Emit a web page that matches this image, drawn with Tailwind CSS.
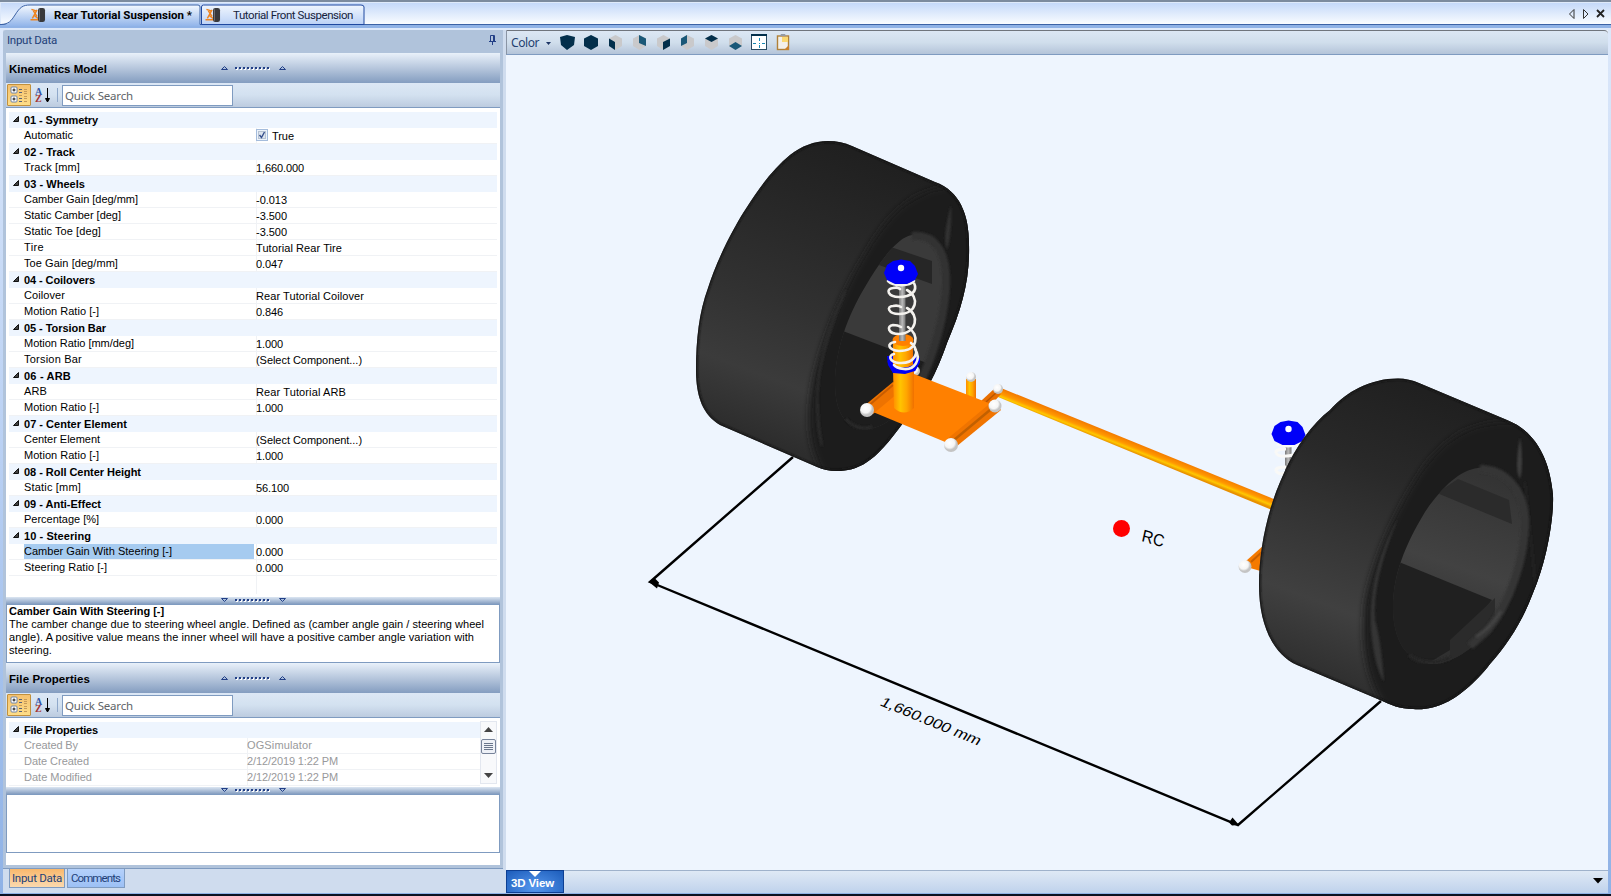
<!DOCTYPE html>
<html lang="en"><head><meta charset="utf-8"><title>Rear Tutorial Suspension</title>
<script src="https://cdn.jsdelivr.net/npm/@tailwindcss/browser@4"></script></head>
<body class="w-[1611px] h-[896px] overflow-hidden flex flex-col bg-[#dce8fa] font-['Liberation_Sans',sans-serif] text-[11px] leading-[13px] text-black">
<svg class="hidden">
 <defs>
  <symbol id="tire" viewBox="0 0 16 16"><path d="M1 1.500l6 2M0 12.500h9M7 2L2 11M3 3l4 6M4 8l4 3" stroke="#ed8420" stroke-width="1.500" fill="none"/><rect x="8" y="0" width="7.500" height="15" rx="2.500" fill="#39393b"/><path d="M9.500 1.500v12" stroke="#77777a"/></symbol>
  <symbol id="cat" viewBox="0 0 18 18"><g fill="#fff" stroke="#6f83a5"><rect x="1" y="1" width="6" height="6" rx="1"/><rect x="1" y="10" width="6" height="6" rx="1"/></g><path d="M2.500 4h3M4 2.500v3M2.500 13h3M4 11.500v3" stroke="#111"/><path d="M9 3.500h3M9 6.500h3M9 12.500h3M9 15.500h3" stroke="#55627a"/><path d="M14 3.500h3M14 5.500h3M14 7.500h3M14 10.500h3M14 12.500h3M9 9.500h3M14 15.500h3" stroke="#c59a58"/></symbol>
  <symbol id="up" viewBox="0 0 7 4"><path d="M.5 3.500h6L3.500.5z" fill="#a9bedb" stroke="#223f86"/></symbol>
  <symbol id="dn" viewBox="0 0 7 4"><path d="M.5.5h6L3.500 3.500z" fill="#a9bedb" stroke="#223f86"/></symbol>
  <symbol id="dots" viewBox="0 0 36 3"><path d="M1 2h36" stroke="#fff" stroke-width="2" stroke-dasharray="2 2"/><path d="M0 1h34" stroke="#223f86" stroke-width="2" stroke-dasharray="2 2"/></symbol>
 </defs>
</svg>
<div class="h-[2px] shrink-0 bg-[#7c8b9e]"></div>
<!-- document tabs -->
<header class="h-[28px] shrink-0 relative font-['Roboto','Open_Sans',sans-serif]">
 <svg class="block w-[1611px] h-[28px]" viewBox="0 2 1611 28">
  <defs><linearGradient id="hg" x2="0" y2="1"><stop stop-color="#c5d9f9"/><stop offset="1" stop-color="#f9fcff"/></linearGradient>
  <linearGradient id="t1" x2="0" y2="1"><stop stop-color="#f4f9ff"/><stop offset="1" stop-color="#92b5ea"/></linearGradient>
  <linearGradient id="t2" x2="0" y2="1"><stop stop-color="#f0f6fe"/><stop offset="1" stop-color="#bcd2f6"/></linearGradient></defs>
  <path d="M0 2.500h1611" stroke="#dfeafa"/><rect x="1" y="3" width="1610" height="21" fill="url(#hg)"/>
  <rect y="24" width="1611" height="1" fill="#3b62a5"/><rect y="25" width="1611" height="3" fill="#8fb2e6"/><rect y="28" width="1611" height="2" fill="#dce8fa"/>
  <path d="M1 25C9 25 11 21 15 15C20 7 23 5 30 5H198Q200 5 200 7V26H1z" fill="url(#t1)"/><path d="M1 24.500C9 24 11 21 15 15C20 7 23 5 30 5H198Q200 5 200 7V24.500" fill="none" stroke="#3b62a5"/>
  <path d="M201.500 24.500V7Q201.500 5 203.500 5H361Q364 5 364 7V24.500z" fill="url(#t2)" stroke="#1f48a0"/>
  <path d="M1574 9.500v9l-4.500-4.500z" fill="none" stroke="#333"/><path d="M1583.500 9.500v9l4.500-4.500z" fill="none" stroke="#333"/><path d="M1597 10l7 7M1604 10l-7 7" stroke="#222" stroke-width="1.800"/>
 </svg>
 <div class="absolute left-[30px] top-[5px] flex items-center h-[16px]"><svg class="w-[16px] h-[15px]"><use href="#tire"/></svg><span class="ml-[8px] text-[11.500px] font-bold whitespace-nowrap" data-w="138">Rear Tutorial Suspension *</span></div>
 <div class="absolute left-[205px] top-[5px] flex items-center h-[16px]"><svg class="w-[16px] h-[15px]"><use href="#tire"/></svg><span class="ml-[12px] text-[11.500px] whitespace-nowrap text-[#16233c]" data-w="120">Tutorial Front Suspension</span></div>
</header>
<main class="h-[863px] shrink-0 flex">
 <div class="w-[3px] bg-linear-to-b from-[#dce8fa] via-[#b9d0f3] to-[#8fb2e6]"></div>
 <section class="w-[500px] flex flex-col bg-[#cfdcee]">
  <div class="h-[838px] shrink-0 bg-[#b0c3db] rounded-tl-[3px] px-[3px] flex flex-col">
   <div class="h-[23px] shrink-0 flex items-center justify-between pl-px pr-[4px] pb-[2px] text-[#223f78] font-['Roboto','Open_Sans',sans-serif] text-[11.500px]"><span data-w="50">Input Data</span>
    <svg class="w-[7px] h-[10px] mb-[2px]" viewBox="0 0 7 10"><path d="M1.500 6V.5h4V6M0 6.500h7M3.500 7v3M4.500 1v5" stroke="#223f86" fill="none"/></svg></div>
   <div class="h-[30px] shrink-0 flex items-center bg-linear-to-b from-[#e9f1fa] via-[#b7c7dd] to-[#849dc0] pl-[3px]"><span class="w-[212px] font-bold text-[11.500px] pt-[2px]"><span data-w="98">Kinematics Model</span></span><svg class="w-[7px] h-[4px]"><use href="#up"/></svg><svg class="ml-[7px] w-[36px] h-[3px]"><use href="#dots"/></svg><svg class="ml-[8px] w-[7px] h-[4px]"><use href="#up"/></svg></div>
   <div class="h-[25px] shrink-0 flex items-center border-b border-[#7f9bc0] bg-linear-to-b from-[#dce7f5] via-[#d3e1f0] to-[#bccbdf] pl-px">
    <div class="w-[24px] h-[22px] border border-[#c2903c] rounded-[1px] bg-linear-to-b from-[#f5c16f] to-[#fddd88] flex items-center justify-center"><svg class="w-[18px] h-[18px]"><use href="#cat"/></svg></div>
    <div class="ml-[4px] flex flex-col w-[8px] text-[10px] leading-[7px] font-bold font-['Liberation_Serif',serif]"><span class="text-[#3458a5]">A</span><span class="text-[#a53434]">Z</span></div>
    <svg class="w-[7px] h-[15px] ml-px" viewBox="0 0 7 15"><path d="M3.500 0v12M1.500 10.500L3.500 14L5.500 10.500z" stroke="#000"/></svg>
    <div class="ml-[6px] w-px h-[14px] bg-[#8fa8ca]"></div>
    <div class="ml-[4px] w-[171px] h-[21px] border border-[#7f9bc0] bg-white pl-[2px] pt-[3px] text-[#606468] font-['Noto_Sans',sans-serif] text-[11.500px]"><span data-w="68">Quick Search</span></div>
   </div>
   <div class="h-[489px] shrink-0 bg-white pl-[3px] pt-[4px] pr-[3px]"><div id="grid"></div><div class="ml-[247px] h-[18px] border-l border-[#f0f2f5]"></div></div>
   <div class="h-[7px] shrink-0 flex items-center bg-linear-to-b from-[#dce6f2] to-[#849dc0] pl-[215px] pb-px"><svg class="w-[7px] h-[4px]"><use href="#dn"/></svg><svg class="ml-[7px] w-[36px] h-[3px]"><use href="#dots"/></svg><svg class="ml-[8px] w-[7px] h-[4px]"><use href="#dn"/></svg></div>
   <div class="h-[59px] shrink-0 bg-white border border-[#7f9bc0] pl-[2px] whitespace-nowrap"><div class="font-bold"><span data-w="155">Camber Gain With Steering [-]</span></div><div><span data-w="475">The camber change due to steering wheel angle. Defined as (camber angle gain / steering wheel</span></div><div><span data-w="465">angle). A positive value means the inner wheel will have a positive camber angle variation with</span></div><div><span data-w="43">steering.</span></div></div>
   <div class="h-[30px] shrink-0 flex items-center bg-linear-to-b from-[#e9f1fa] via-[#b7c7dd] to-[#849dc0] pl-[3px]"><span class="w-[212px] font-bold text-[11.500px] pt-[2px]"><span data-w="81">File Properties</span></span><svg class="w-[7px] h-[4px]"><use href="#up"/></svg><svg class="ml-[7px] w-[36px] h-[3px]"><use href="#dots"/></svg><svg class="ml-[8px] w-[7px] h-[4px]"><use href="#up"/></svg></div>
   <div class="h-[25px] shrink-0 flex items-center border-b border-[#7f9bc0] bg-linear-to-b from-[#dce7f5] via-[#d3e1f0] to-[#bccbdf] pl-px">
    <div class="w-[24px] h-[22px] border border-[#c2903c] rounded-[1px] bg-linear-to-b from-[#f5c16f] to-[#fddd88] flex items-center justify-center"><svg class="w-[18px] h-[18px]"><use href="#cat"/></svg></div>
    <div class="ml-[4px] flex flex-col w-[8px] text-[10px] leading-[7px] font-bold font-['Liberation_Serif',serif]"><span class="text-[#3458a5]">A</span><span class="text-[#a53434]">Z</span></div>
    <svg class="w-[7px] h-[15px] ml-px" viewBox="0 0 7 15"><path d="M3.500 0v12M1.500 10.500L3.500 14L5.500 10.500z" stroke="#000"/></svg>
    <div class="ml-[6px] w-px h-[14px] bg-[#8fa8ca]"></div>
    <div class="ml-[4px] w-[171px] h-[21px] border border-[#7f9bc0] bg-white pl-[2px] pt-[3px] text-[#606468] font-['Noto_Sans',sans-serif] text-[11.500px]"><span data-w="68">Quick Search</span></div>
   </div>
   <div class="h-[69px] shrink-0 bg-white pl-[3px] pr-[3px] pt-[3px] flex"><div id="grid2" class="w-[471px] pt-px"></div>
    <svg class="w-[17px] h-[64px]" viewBox="0 0 17 64"><rect x=".5" y=".5" width="16" height="62" fill="#f8f9fb" stroke="#e3e7ef"/><path d="M4 11h9L8.500 6z" fill="#444"/><rect x="1.500" y="18.500" width="14" height="14" rx="1.500" fill="#eef1f7" stroke="#77839a"/><path d="M4 22.500h9M4 24.500h9M4 26.500h9M4 28.500h9" stroke="#69768c"/><path d="M4 52h9L8.500 57z" fill="#444"/></svg></div>
   <div class="h-[7px] shrink-0 flex items-center bg-linear-to-b from-[#dce6f2] to-[#849dc0] pl-[215px] pb-px"><svg class="w-[7px] h-[4px]"><use href="#dn"/></svg><svg class="ml-[7px] w-[36px] h-[3px]"><use href="#dots"/></svg><svg class="ml-[8px] w-[7px] h-[4px]"><use href="#dn"/></svg></div>
   <div class="h-[59px] shrink-0 bg-white border border-[#7f9bc0]"></div>
   <div class="h-[12px] shrink-0 bg-white"></div>
  </div>
  <div class="h-px bg-[#7f9bc0] shrink-0"></div>
  <div class="flex pl-[6px] gap-[2px] font-['Roboto','Open_Sans',sans-serif] text-[11.500px] text-[#223f78]">
   <div class="w-[56px] h-[19px] border border-t-0 border-[#7f9bc0] bg-linear-to-b from-[#f9b86c] to-[#fbd9ae] pl-[2px] pt-[3px]"><span data-w="50">Input Data</span></div>
   <div class="w-[58px] h-[19px] border border-t-0 border-[#7f9bc0] bg-linear-to-b from-[#b5d1fb] to-[#9cc0f5] pl-[3px] pt-[3px]"><span data-w="49">Comments</span></div>
  </div>
 </section>
 <div class="w-[3px] bg-[#cfdcee]"></div>
 <section class="w-[1102px] flex flex-col bg-[#eef5fe]">
  <div class="h-[25px] shrink-0 border-t border-l border-t-[#70757d] border-l-[#8a95a5] border-b border-b-[#7f9bc0] bg-linear-to-b from-[#dce7f4] via-[#d0deec] to-[#b4c4d9] rounded-tr-[4px] flex items-center pl-[4px] text-[#24406f]">
   <div class="w-[34px] shrink-0 text-[12px] font-['Noto_Sans',sans-serif]"><span data-w="28">Color</span></div>
   <svg class="w-[270px] h-[22px]" viewBox="545 32 270 22">
    <path d="M546 42h5l-2.500 3z" fill="#1e3566"/>
    <path d="M560 37L567 35L575 37L574 45L567 50L561 45zM591 35L598 38.500V46L591 50L584 46V38.500z" fill="#032f4b"/>
    <g fill="#c9c9cb"><path d="M615.500 35L622 38.500V46L615.500 50L609 46V38.500zM639.500 35L646 38.500V46L639.500 50L633 46V38.500zM663.500 35L670 38.500V46L663.500 50L657 46V38.500zM687 35L694 38.500V46L687 50L681 46V38.500zM711.500 35L718 38.500V46L711.500 50L705 46V38.500zM735.500 35L742 38.500V46L735.500 50L729 46V38.500z"/></g>
    <path d="M609 38.500L615 42V50L609 46zM663 42L670 38.500V46L663 50zM705 38.500L711.500 35L718 38.500L711.500 42z" fill="#032f4b"/><path d="M639 35L646 38.500V46L639 43zM681 38.500L687 35V43L681 46zM729 46L735.500 42L742 46L735.500 50z" fill="#1a5878"/>
    <rect x="751.500" y="34.500" width="15" height="15" fill="#fff" stroke="#294a62"/><path d="M751 35h16" stroke="#032f4b" stroke-width="2"/><path d="M759.500 38v4M759.500 45v4M753 43.500h4M762 43.500h4" stroke="#1689b5" stroke-dasharray="3 1"/><path d="M759 43.500h1" stroke="#1689b5"/>
    <rect x="777.500" y="36" width="11" height="13.500" fill="#f3f0ea" stroke="#b08038" stroke-width="1.400"/><rect x="782" y="37" width="6" height="5" fill="#fbd972"/><path d="M780 36h6l-1-2h-4z" fill="#949ba6"/><path d="M784 50l5-5v5z" fill="#c8802b"/>
   </svg>
  </div>
  <svg class="block w-[1102px] h-[815px] shrink-0" viewBox="506 55 1102 815">
   <defs>
    <linearGradient id="tr" gradientUnits="userSpaceOnUse" x1="1445" y1="400" x2="1340" y2="680"><stop stop-color="#202020"/><stop offset=".3" stop-color="#292929"/><stop offset=".55" stop-color="#353535"/><stop offset=".78" stop-color="#404040"/><stop offset="1" stop-color="#303030"/></linearGradient>
    <linearGradient id="trl" gradientUnits="userSpaceOnUse" x1="870" y1="160" x2="765" y2="440"><stop stop-color="#202020"/><stop offset=".3" stop-color="#292929"/><stop offset=".55" stop-color="#313131"/><stop offset=".8" stop-color="#3b3b3b"/><stop offset="1" stop-color="#2d2d2d"/></linearGradient>
    <linearGradient id="bore" gradientUnits="userSpaceOnUse" x1="1490" y1="480" x2="1435" y2="640"><stop stop-color="#343434"/><stop offset=".55" stop-color="#424242"/><stop offset="1" stop-color="#303030"/></linearGradient>
    <linearGradient id="cyl"><stop stop-color="#ff8c00"/><stop offset=".35" stop-color="#ffc400"/><stop offset=".65" stop-color="#ffa500"/><stop offset="1" stop-color="#f07000"/></linearGradient>
    <linearGradient id="rod"><stop stop-color="#777"/><stop offset=".5" stop-color="#bbb"/><stop offset="1" stop-color="#777"/></linearGradient>
    <linearGradient id="bar" gradientUnits="userSpaceOnUse" x1="1138" y1="443" x2="1134" y2="453"><stop stop-color="#f27800"/><stop offset=".5" stop-color="#ff9800"/><stop offset=".75" stop-color="#ffc800"/><stop offset="1" stop-color="#e89000"/></linearGradient>
    <radialGradient id="ball" cx=".4" cy=".35"><stop stop-color="#fff"/><stop offset=".7" stop-color="#f5f5f5"/><stop offset="1" stop-color="#c4c4c4"/></radialGradient>
    <filter id="b1" x="-20%" y="-20%" width="140%" height="140%"><feGaussianBlur stdDeviation="1"/></filter><filter id="b2" x="-20%" y="-20%" width="140%" height="140%"><feGaussianBlur stdDeviation="3"/></filter>
    <path id="outR" d="M1398 378.500Q1409 378.500 1419 383L1507 420C1537 432 1550 461 1553 495C1554 520 1546 563 1533 593C1523 620 1508 644 1490 664C1475 684 1456 698 1447 702C1435 708 1424 710 1413 709C1400 709 1391 705 1380 700L1297 665C1273 654 1259 625 1259 585C1259 548 1268 507 1284 473C1296 446 1312 424 1330 410C1346 392 1370 378.500 1398 378.500z"/>
    <path id="outL" d="M828 141Q841 141 852 146L935 182C960 191 969 215 969 244C970 280 962 308 947 343C938 370 922 402 903 423C890 441 877 456 867 462C857 469 846 471 837 471Q826 471 817 467L720 425C703 415 696 397 696 370C696 340 699 312 708 288C716 262 733 228 747 207C761 185 775 167 790 155C802 146 814 141 828 141z"/>
    <clipPath id="cr"><use href="#outR"/></clipPath><clipPath id="cl"><use href="#outL"/></clipPath>
    <path id="holeR" d="M1478 468C1504 466 1525 488 1526 520C1527 556 1511 603 1488 630C1472 651 1448 665 1431 664C1406 662 1393 639 1393 608C1393 575 1405 545 1425 512C1442 487 1460 470 1478 468z"/><clipPath id="chr"><use href="#holeR"/></clipPath>
    <path id="holeL" d="M912 235C934 233 945 250 946 277C947 310 934 356 918 386C902 415 882 430 864 429C845 428 835 411 835 384C835 350 848 315 865 287C879 263 897 237 912 235z"/><clipPath id="chl"><use href="#holeL"/></clipPath>
   </defs>
   <g stroke="#000" stroke-width="2.400" fill="none"><path d="M793 457L650 582L1238 825L1381 701"/></g>
   <path d="M649 582l6-3.500 4 4-2 6zM1239 825l-7 .5-3-3 3.500-5z"/>
   <use href="#outL" fill="url(#trl)"/>
   <g clip-path="url(#cl)">
    <path d="M960 185C910 188 889 214 867 250C835 302 817 356 812 385C804 430 812 456 826 478L900 480L980 390V210z" fill="#1e1e1e" filter="url(#b2)"/>
    <path d="M846 290C823 335 818 375 817 400Q817 430 822 446Q815 410 819 375Q826 335 846 290z" fill="#363636" stroke="#2c2c2c" stroke-width="2" filter="url(#b1)"/><path d="M951 205C944 232 944 242 947 250Q952 235 951 205z" fill="#303030" filter="url(#b1)"/>
    <use href="#holeL" fill="#3a3a3a"/><g clip-path="url(#chl)"><path d="M835 328L950 372V440H820z" fill="#1d1d1d"/><path d="M870 240L932 261V284L865 260z" fill="#262626"/></g>
    <path d="M912 236C934 234 945 250 946 277C947 310 934 356 918 386" fill="none" stroke="#333" stroke-width="8" filter="url(#b1)"/><path d="M846 419Q856 431 872 427" fill="none" stroke="#292929" stroke-width="3" filter="url(#b1)"/>
    <use href="#outL" fill="none" stroke="#151515" stroke-width="3" filter="url(#b1)"/>
   </g>
   <!-- bar and suspension plate -->
   <path d="M1001 388L1276 500L1272 510L998 397z" fill="url(#bar)"/>
   <rect x="966" y="379" width="10" height="24" fill="url(#cyl)"/><circle cx="971" cy="377" r="5" fill="url(#ball)"/>
   <path d="M981 401L994 389L1001 394L990 406z" fill="#e86e00"/><path d="M986 402L997 392" stroke="#b95600" stroke-width="1.500"/>
   <circle cx="915" cy="371" r="5" fill="url(#ball)"/>
   <path d="M914 374L986 402L1000 409L950 444L873 412z" fill="#ff8000"/>
   <path d="M893 382L864 406L873 414L904 388z" fill="#ee7300"/><path d="M867 407L893 385" stroke="#c95d00" stroke-width="2"/>
   <path d="M946 440L993 401L1001 410L957 446z" fill="#f07400"/><path d="M954 440L996 405" stroke="#c26000" stroke-width="2.500"/>
   <circle cx="998" cy="389" r="5" fill="url(#ball)"/><circle cx="995" cy="406" r="6.500" fill="url(#ball)"/><circle cx="951" cy="445" r="7" fill="url(#ball)"/><circle cx="867" cy="410" r="7" fill="url(#ball)"/>
   <path d="M887 356H919L920 362L915 371L905 374L893 373L888 365z" fill="#0000f5"/>
   <path d="M893 370H914V408Q904 417 894 408z" fill="url(#cyl)"/><path d="M893 341H913V366Q903 371 893 366z" fill="url(#cyl)"/><path d="M887 361L893 365Q903 370 913 365L920 358V362L915 371L905 374L893 373z" fill="#0000f5"/><ellipse cx="903" cy="340" rx="10.500" ry="6" fill="#ff8000"/>
   <rect x="899" y="285" width="6.500" height="56" fill="url(#rod)"/>
   <path d="M888 281C893 286 909 287 914 281M914 283C918 291 911 297 899 297C888 297 885 289 893 288Q898 287 900 289M907 290C920 297 917 314 899 314C888 314 886 306 893 306Q898 305 901 307M907 308C920 315 917 333 899 334C888 334 886 326 893 325Q898 325 901 327M908 327C920 335 918 351 899 351C888 350 886 343 895 342M911 343C922 352 914 364 899 363C889 362 888 355 894 354M915 349C922 360 914 370 904 369Q896 368 894 365" fill="none" stroke="#f4f2ee" stroke-width="2.600" stroke-linecap="round"/>
   <path id="cap" d="M893 261L901 259.500L910 261L915 266L918 274L915 280L907 284H895L887 280L884 273L887 265z" fill="#0000f8"/><circle cx="901" cy="268" r="3.200" fill="#fff"/>
   <!-- partly hidden right coilover -->
   <rect x="1285" y="446" width="6.500" height="30" fill="url(#rod)"/><path d="M1277 444Q1287 448 1300 444M1276 453Q1275 449 1286 449M1276 453Q1280 459 1296 454V450M1276 471Q1275 467 1286 467M1276 471Q1280 476 1290 472M1279 489h4" fill="none" stroke="#f9f9f7" stroke-width="3"/><use href="#cap" x="387.500" y="161"/><circle cx="1288.500" cy="429" r="3.200" fill="#fff"/>
   <path d="M1246 561L1264 545V572L1250 568z" fill="#f57a00"/><path d="M1251 562L1263 551" stroke="#c86000" stroke-width="2"/><circle cx="1245" cy="566.500" r="6.500" fill="url(#ball)"/>
   <use href="#outR" fill="url(#tr)"/>
   <g clip-path="url(#cr)">
    <path d="M1520 422C1470 418 1440 440 1415 480C1380 536 1365 590 1364 610C1360 660 1372 690 1388 712L1480 720L1570 600V450z" fill="#1f1f1f" filter="url(#b2)"/>
    <path d="M1398 518C1375 560 1369 600 1371 630C1373 655 1378 672 1384 682Q1381 640 1375 620Q1372 580 1398 518z" fill="#343434" filter="url(#b1)"/>
    <path d="M1520 437C1516 462 1516 472 1520 479Q1524 465 1520 437z" fill="#3c3c3c" filter="url(#b1)"/><path d="M1525 482L1536 590" stroke="#282828" stroke-width="1.500" filter="url(#b1)"/>
    <use href="#holeR" fill="url(#bore)"/><g clip-path="url(#chr)"><path d="M1399 562L1492 600L1450 650L1400 680L1370 600z" fill="#202020"/><path d="M1450 640L1495 598V640L1450 680z" fill="#2b2b2b"/><path d="M1458 479L1509 500L1512 524L1437 493z" fill="#2b2b2b"/></g>
    <path d="M1480 469C1504 469 1524 488 1525 520C1526 556 1510 603 1488 630L1470 646" fill="none" stroke="#363636" stroke-width="8" filter="url(#b1)"/><path d="M1476 637Q1491 628 1501 611" fill="none" stroke="#444" stroke-width="3" filter="url(#b1)"/><path d="M1409 655Q1425 668 1450 658" fill="none" stroke="#282828" stroke-width="4" filter="url(#b1)"/>
    <use href="#outR" fill="none" stroke="#151515" stroke-width="3" filter="url(#b1)"/>
   </g>
   <circle cx="1121.500" cy="528.500" r="8.500" fill="#f00"/>
   <g font-family="Liberation Sans, sans-serif"><text transform="matrix(.92 .26 -.22 1.02 1141 541)" font-size="16.500" textLength="24">RC</text><text transform="matrix(.925 .38 -.5 .75 879 705)" font-size="16" textLength="107" lengthAdjust="spacingAndGlyphs">1,660.000 mm</text></g>
  </svg>
  <div class="h-[23px] shrink-0 flex border-t border-[#9fb2cb] bg-linear-to-b from-[#dfe9f5] to-[#bfd2ec] relative">
   <div class="-mt-px w-[58px] h-[23px] border border-[#0d3f93] bg-radial-[at_50%_80%] from-[#5597ee] to-[#1c5cba] relative"><svg class="absolute left-[21px] top-0 w-[14px] h-[7px]" viewBox="0 0 14 7"><path d="M1 0h12L7 6z" fill="#fff"/></svg><span class="absolute left-[4px] top-[6px] text-white font-bold text-[11.500px] whitespace-nowrap" data-w="43">3D View</span></div>
   <svg class="ml-auto mr-[5px] mt-[7px] w-[10px] h-[6px]" viewBox="0 0 10 6"><path d="M0 0h10L5 5.500z"/></svg>
  </div>
 </section>
 <div class="w-[3px] bg-linear-to-b from-[#dce8fa] via-[#b9d0f3] to-[#8fb2e6]"></div>
</main>
<div class="h-px shrink-0 bg-[#8fb2e6]"></div><div class="h-[2px] shrink-0 bg-[#0a1222]"></div>
<script>
const rows=[["01 - Symmetry",74],["Automatic",49,"True",22],["02 - Track",51],["Track [mm]",56,"1,660.000",48],["03 - Wheels",61],["Camber Gain [deg/mm]",114,"-0.013",31],["Static Camber [deg]",97,"-3.500",31],["Static Toe [deg]",77,"-3.500",31],["Tire",20,"Tutorial Rear Tire",86],["Toe Gain [deg/mm]",94,"0.047",27],["04 - Coilovers",71],["Coilover",41,"Rear Tutorial Coilover",108],["Motion Ratio [-]",75,"0.846",27],["05 - Torsion Bar",82],["Motion Ratio [mm/deg]",110,"1.000",27],["Torsion Bar",58,"(Select Component...)",106],["06 - ARB",47],["ARB",23,"Rear Tutorial ARB",90],["Motion Ratio [-]",75,"1.000",27],["07 - Center Element",103],["Center Element",76,"(Select Component...)",106],["Motion Ratio [-]",75,"1.000",27],["08 - Roll Center Height",117],["Static [mm]",57,"56.100",33],["09 - Anti-Effect",77],["Percentage [%]",75,"0.000",27],["10 - Steering",67],["Camber Gain With Steering [-]",148,"0.000",27],["Steering Ratio [-]",83,"0.000",27]];
const file=[["File Properties",74],["Created By",54,"OGSimulator",65],["Date Created",65,"2/12/2019 1:22 PM",91],["Date Modified",68,"2/12/2019 1:22 PM",91]];
const head=r=>`<div class="h-[16px] flex items-center bg-[#eef5fe] font-bold whitespace-nowrap"><svg class="w-[15px] h-[10px] mb-[2px]" viewBox="0 0 15 10"><path d="M4.500 7.500h5v-5z" fill="#444" stroke="#111"/></svg><span data-w="${r[1]}">${r[0]}</span></div>`;
const check='<svg class="w-[12px] h-[12px] mr-[4px] mb-[2px]" viewBox="0 0 12 12"><rect x=".5" y=".5" width="11" height="11" fill="#edf3fb" stroke="#a4bcdc"/><rect x="2.500" y="2.500" width="7" height="7" fill="#dce4ee" stroke="#b7c3d3"/><path d="M3.500 6l2 2.500 3-5.500" fill="none" stroke="#344e8c" stroke-width="1.400"/></svg>';
document.getElementById("grid").innerHTML=rows.map((r,i)=>r.length<3?head(r):`<div class="h-[16px] flex border-b border-[#f0f2f5] pl-[15px] whitespace-nowrap"><div class="${i==27?'w-[230px] mr-[2px] h-[15px] pt-px bg-[#a6cbf0]':'w-[232px] pt-px'}"><span data-w="${r[1]}">${r[0]}</span></div><div class="flex items-center h-[15px] pt-px shadow-[inset_1px_0_#f0f2f5]">${i==1?check:''}<span data-w="${r[3]}">${r[2]}</span></div></div>`).join("");
document.getElementById("grid2").innerHTML=file.map(r=>r.length<3?head(r):`<div class="h-[16px] flex border-b border-[#f0f2f5] pl-[15px] whitespace-nowrap text-[#98999b]"><div class="w-[223px] pt-px"><span data-w="${r[1]}">${r[0]}</span></div><div class="pt-px shadow-[inset_1px_0_#f0f2f5]"><span data-w="${r[3]}">${r[2]}</span></div></div>`).join("");
function fit(){
 const els=[...document.querySelectorAll("[data-w]")];
 els.forEach(e=>{e.style.whiteSpace="nowrap";e.style.letterSpacing="0px";});
 const widths=els.map(e=>e.getBoundingClientRect().width);
 els.forEach((e,i)=>{e.style.letterSpacing=((e.dataset.w-widths[i])/e.textContent.length)+"px";});
}
fit();
addEventListener("load",()=>{fit();requestAnimationFrame(fit);setTimeout(fit,60);setTimeout(fit,250);});
new MutationObserver(fit).observe(document.head,{childList:true,subtree:true});
</script>
</body></html>
